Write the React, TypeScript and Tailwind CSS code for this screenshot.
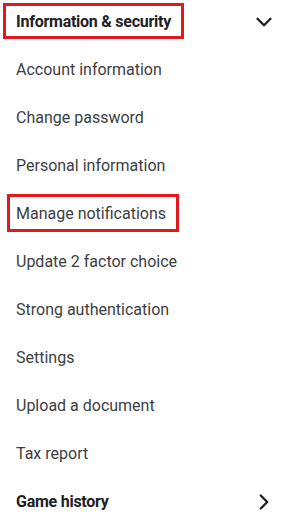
import { ChevronDown, ChevronRight } from 'lucide-react';

const items = [
  'Account information',
  'Change password',
  'Personal information',
  'Manage notifications',
  'Update 2 factor choice',
  'Strong authentication',
  'Settings',
  'Upload a document',
  'Tax report',
];

export default function App() {
  return (
    <main className="relative w-[285px] h-[524px] overflow-hidden bg-white font-['Roboto',sans-serif]">
      <div className="-mt-[2px]">
        {/* Section header */}
        <div className="h-12 flex items-center justify-between pl-4 pr-[8px]">
          <span className="text-[16px] font-bold tracking-[-0.25px] text-[#202124]">Information &amp; security</span>
          <ChevronDown className="w-[26px] h-[26px] text-[#202124]" strokeWidth={2.2} />
        </div>

        <ul>
          {items.map((label) => (
            <li key={label} className="h-12 flex items-center pl-4 text-[16px] text-[#3c4043]">
              {label}
            </li>
          ))}
        </ul>

        <div className="h-12 flex items-center justify-between pl-4 pr-[8px]">
          <span className="text-[16px] font-bold tracking-[-0.25px] text-[#202124]">Game history</span>
          <ChevronRight className="w-[26px] h-[26px] text-[#202124]" strokeWidth={2.2} />
        </div>
      </div>

      {/* annotation highlights */}
      <div className="absolute left-[3px] top-[3px] w-[181px] h-[36px] border-[3px] border-[#e3181c]" />
      <div className="absolute left-[7px] top-[194px] w-[172px] h-[38px] border-[3px] border-[#e3181c]" />
    </main>
  );
}
